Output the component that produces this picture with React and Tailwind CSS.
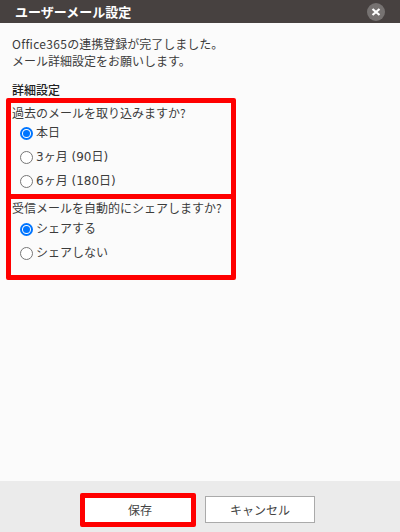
function Radio({ label, checked }) {
  return (
    <label className="flex items-center h-6 pl-[9px]">
      <span
        className={
          checked
            ? "w-[13px] h-[13px] rounded-full border-2 border-[#0075ff] bg-white flex items-center justify-center shrink-0"
            : "w-[13px] h-[13px] rounded-full border border-[#767676] bg-white shrink-0"
        }
      >
        {checked && <span className="block w-[7px] h-[7px] rounded-full bg-[#0075ff]" />}
      </span>
      <span className="ml-[3px] font-['DejaVu_Sans','Noto_Sans_CJK_JP',sans-serif]">{label}</span>
    </label>
  );
}

export default function App() {
  return (
    <div className="w-[400px] h-[532px] flex flex-col bg-[#fbfbfb] text-[12px] leading-[18px] text-[#3c3c3c] font-['Noto_Sans_CJK_JP','Noto_Sans',sans-serif] overflow-hidden">
      <header className="h-[23px] shrink-0 bg-[#474140] flex items-center justify-between pl-[15px] pr-[15px]">
        <h1 className="text-[13px] font-bold text-white">ユーザーメール設定</h1>
        <button className="w-[18px] h-[18px] mt-[1px] rounded-full bg-[#767271] flex items-center justify-center">
          <svg width="10" height="10" viewBox="0 0 10 10">
            <path d="M1.5 2 L8.5 8 M8.5 2 L1.5 8" stroke="#ffffff" strokeWidth="2.2" />
          </svg>
        </button>
      </header>

      <main className="flex-1 pt-[12px]">
        <div className="pl-[12px] leading-[17px]">
          <p><span className="tracking-[0.3px]">Office365</span>の連携登録が完了しました。</p>
          <p>メール詳細設定をお願いします。</p>
          <p className="mt-[9px] text-[#222222] font-medium h-[20px] flex items-end">詳細設定</p>
        </div>
        <section className="ml-[6px] w-[230px] h-[101px] border-[5px] border-[#ff0000] rounded-[2px]">
          <p className="pl-[1px] pt-[1px] h-[18px]">過去のメールを取り込みますか?</p>
          <Radio label="本日" checked />
          <Radio label="3ヶ月 (90日)" />
          <Radio label="6ヶ月 (180日)" />
        </section>
        <section className="ml-[6px] w-[230px] h-[86px] -mt-[5px] border-[5px] border-[#ff0000] rounded-[2px]">
          <p className="pl-[1px] h-[18px]">受信メールを自動的にシェアしますか?</p>
          <Radio label="シェアする" checked />
          <Radio label="シェアしない" />
        </section>
      </main>

      <footer className="h-[51px] shrink-0 bg-[#ebebeb] flex items-start pl-[80px] pt-[12px]">
        <button className="w-[116px] h-[34px] pl-[4px] border-[5px] border-[#ff0000] rounded-[2px] bg-white text-[#444444]">保存</button>
        <button className="w-[110px] h-[27px] mt-[3px] ml-[9px] border border-[#aaaaaa] bg-white text-[#444444]">キャンセル</button>
      </footer>
    </div>
  );
}
